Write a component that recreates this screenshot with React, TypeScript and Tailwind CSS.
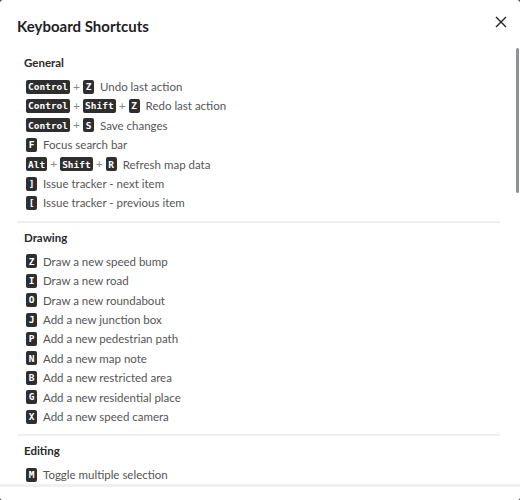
import type { ReactNode } from "react";

type Shortcut = { keys: string[]; label: string };
type Section = { title: string; items: Shortcut[]; last?: boolean };

const sections: Section[] = [
  {
    title: "General",
    items: [
      { keys: ["Control", "Z"], label: "Undo last action" },
      { keys: ["Control", "Shift", "Z"], label: "Redo last action" },
      { keys: ["Control", "S"], label: "Save changes" },
      { keys: ["F"], label: "Focus search bar" },
      { keys: ["Alt", "Shift", "R"], label: "Refresh map data" },
      { keys: ["]"], label: "Issue tracker - next item" },
      { keys: ["["], label: "Issue tracker - previous item" },
    ],
  },
  {
    title: "Drawing",
    items: [
      { keys: ["Z"], label: "Draw a new speed bump" },
      { keys: ["I"], label: "Draw a new road" },
      { keys: ["O"], label: "Draw a new roundabout" },
      { keys: ["J"], label: "Add a new junction box" },
      { keys: ["P"], label: "Add a new pedestrian path" },
      { keys: ["N"], label: "Add a new map note" },
      { keys: ["B"], label: "Add a new restricted area" },
      { keys: ["G"], label: "Add a new residential place" },
      { keys: ["X"], label: "Add a new speed camera" },
    ],
  },
  {
    title: "Editing",
    last: true,
    items: [{ keys: ["M"], label: "Toggle multiple selection" }],
  },
];

function Kbd({ children }: { children: ReactNode }) {
  return (
    <kbd className="inline-flex h-[14px] min-w-[11px] items-center justify-center rounded-[2px] bg-[#2e2e2e] px-[2px] font-['DejaVu_Sans_Mono',monospace] text-[9.5px] font-bold leading-none text-white">
      {children}
    </kbd>
  );
}

function Row({ item }: { item: Shortcut }) {
  return (
    <li className="flex h-[19.4px] items-center">
      <span className="flex items-center gap-[3px]">
        {item.keys.map((k, i) => (
          <span key={k + i} className="flex items-center gap-[3px]">
            {i > 0 && <span className="text-[12px] text-[#888]">+</span>}
            <Kbd>{k}</Kbd>
          </span>
        ))}
      </span>
      <span className="ml-[6px] text-[11.5px] text-[#555]">{item.label}</span>
    </li>
  );
}

export default function App() {
  return (
    <div className="h-[500px] w-[520px] bg-[#2a2a2a]">
      <div className="relative flex h-full flex-col overflow-hidden rounded-[3px] bg-white font-['Lato',sans-serif]">
        <header className="flex h-[48px] items-start justify-between pl-[17px] pr-[12px] pt-[15px]">
          <h2 className="text-[15px] font-bold leading-[22px] text-[#1f1f1f]">Keyboard Shortcuts</h2>
          <button className="p-[1px] text-[#222]" aria-label="Close">
            <svg width="12" height="12" viewBox="0 0 12 12" fill="none" stroke="currentColor" strokeWidth="1.4">
              <path d="M1 1L11 11M11 1L1 11" />
            </svg>
          </button>
        </header>

        <div className="flex-1 overflow-hidden pl-[17px] pr-[20px]">
          {sections.map((s) => (
            <section
              key={s.title}
              className={s.last ? "pt-[5px]" : "border-b-2 border-[#efefef] pb-[8px] pt-[5px]"}
            >
              <h3 className="pl-[7px] text-[11.5px] font-bold leading-[20px] text-[#2a2a2a]">{s.title}</h3>
              <ul className="mt-[4px] pl-[9px]">
                {s.items.map((it) => (
                  <Row key={it.label} item={it} />
                ))}
              </ul>
            </section>
          ))}
        </div>

        <footer className="h-[16px] border-t-[3px] border-[#f0f0f0] bg-white" />

        <div className="absolute right-[1px] top-[48px] h-[145px] w-[3px] rounded-full bg-[#8e9196]" />
      </div>
    </div>
  );
}
